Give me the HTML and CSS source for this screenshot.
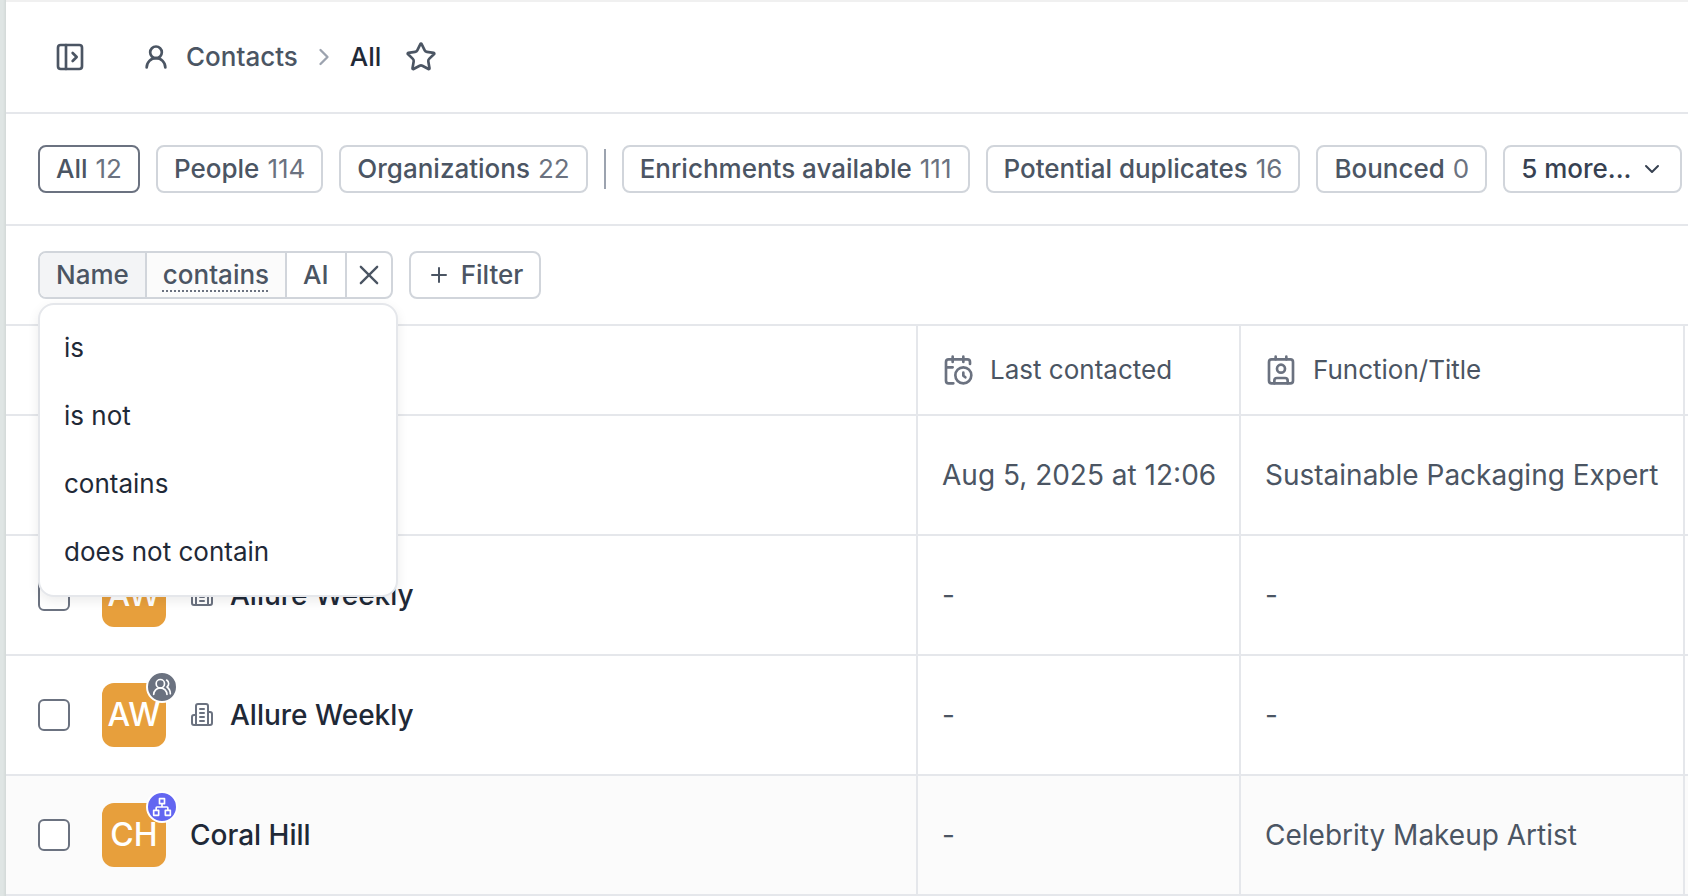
FILE: index.html
```html
<!DOCTYPE html>
<html lang="en">
<head>
    <meta charset="UTF-8">
    <meta name="viewport" content="width=device-width, initial-scale=1.0">
    <title>Contacts</title>
    <link rel="stylesheet" href="styles.css">
</head>
<body>
    <svg class="sprite" aria-hidden="true">
        <symbol id="building" viewBox="0 0 24 24">
            <path d="M6 22V3a2 2 0 0 1 2-2h8a2 2 0 0 1 2 2v19ZM6 12H4a2 2 0 0 0-2 2v6a2 2 0 0 0 2 2h2M18 9h2a2 2 0 0 1 2 2v9a2 2 0 0 1-2 2h-2M10 6h4M10 10h4M10 14h4M10 18h4"/>
        </symbol>
        <symbol id="users" viewBox="0 0 24 24">
            <path d="M18 21a8 8 0 0 0-16 0M22 20c0-3.4-2-6.500-4-8a5 5 0 0 0-.450-8.300"/>
            <circle cx="10" cy="8" r="5"/>
        </symbol>
        <symbol id="network" viewBox="0 0 24 24">
            <path d="M16 16h6v6h-6zM2 16h6v6H2zM9 2h6v6H9zM5 16v-3a1 1 0 0 1 1-1h12a1 1 0 0 1 1 1v3M12 12V8"/>
        </symbol>
    </svg>

    <div class="app">
        <header class="topbar">
            <button class="icon-btn" aria-label="Open sidebar">
                <svg class="icon icon-panel" viewBox="0 0 24 24"><rect x="3" y="3" width="18" height="18" rx="2"/><path d="M9 3v18M14 9l3 3-3 3"/></svg>
            </button>
            <nav class="breadcrumb">
                <a href="#" class="crumb">
                    <svg class="icon icon-user" viewBox="0 0 24 24"><circle cx="12" cy="8" r="5"/><path d="M20 21a8 8 0 0 0-16 0"/></svg>
                    Contacts
                </a>
                <svg class="icon icon-chevron" viewBox="0 0 24 24"><path d="m9 18 6-6-6-6"/></svg>
                <a href="#" class="crumb current">All</a>
            </nav>
            <button class="icon-btn star" aria-label="Add to favorites">
                <svg class="icon icon-star" viewBox="0 0 24 24"><path d="M11.525 2.295a.53.53 0 0 1 .95 0l2.310 4.679a2.123 2.123 0 0 0 1.595 1.160l5.166.756a.53.53 0 0 1 .294.904l-3.736 3.638a2.123 2.123 0 0 0-.611 1.878l.882 5.140a.53.53 0 0 1-.771.560l-4.618-2.428a2.122 2.122 0 0 0-1.973 0L6.396 21.010a.53.53 0 0 1-.770-.560l.881-5.139a2.122 2.122 0 0 0-.611-1.879L2.160 9.795a.53.53 0 0 1 .294-.906l5.165-.755a2.122 2.122 0 0 0 1.597-1.160z"/></svg>
            </button>
        </header>

        <div class="views">
            <button class="pill active">All <span class="count">12</span></button>
            <button class="pill">People <span class="count">114</span></button>
            <button class="pill">Organizations <span class="count">22</span></button>
            <span class="divider"></span>
            <button class="pill">Enrichments available <span class="count">111</span></button>
            <button class="pill">Potential duplicates <span class="count">16</span></button>
            <button class="pill">Bounced <span class="count">0</span></button>
            <button class="pill more">5 more... <svg class="icon icon-down" viewBox="0 0 24 24"><path d="m6 9 6 6 6-6"/></svg></button>
        </div>

        <div class="filters">
            <div class="filter">
                <span class="part field">Name</span>
                <button class="part operator"><span class="dotted">contains</span></button>
                <button class="part">AI</button>
                <button class="part remove" aria-label="Remove filter">
                    <svg class="icon icon-x" viewBox="0 0 24 24"><path d="M19 5 5 19M5 5l14 14"/></svg>
                </button>
                <div class="menu" role="menu">
                    <button class="option" role="menuitem">is</button>
                    <button class="option" role="menuitem">is not</button>
                    <button class="option" role="menuitem">contains</button>
                    <button class="option" role="menuitem">does not contain</button>
                </div>
            </div>
            <button class="pill add"><svg class="icon icon-plus" viewBox="0 0 24 24"><path d="M5 12h14M12 5v14"/></svg> Filter</button>
        </div>

        <table class="contacts">
            <colgroup>
                <col>
                <col class="col-date">
                <col class="col-title">
                <col class="col-rest">
            </colgroup>
            <thead>
                <tr>
                    <th></th>
                    <th>
                        <div class="heading">
                            <svg class="icon icon-head" viewBox="0 0 24 24"><path d="M21 7.500V6a2 2 0 0 0-2-2H5a2 2 0 0 0-2 2v14a2 2 0 0 0 2 2h3.500M16 2v4M8 2v4M3 10h5M17.500 17.500 16 16.300V14"/><circle cx="16" cy="16" r="6"/></svg>
                            Last contacted
                        </div>
                    </th>
                    <th>
                        <div class="heading">
                            <svg class="icon icon-head" viewBox="0 0 24 24"><rect x="3" y="4" width="18" height="18" rx="2"/><circle cx="12" cy="11" r="3"/><path d="M16 2v2M8 2v2M7 22v-2a2 2 0 0 1 2-2h6a2 2 0 0 1 2 2v2"/></svg>
                            Function/Title
                        </div>
                    </th>
                    <th></th>
                </tr>
            </thead>
            <tbody>
                <tr>
                    <td></td>
                    <td>Aug 5, 2025 at 12:06</td>
                    <td>Sustainable Packaging Expert</td>
                    <td></td>
                </tr>
                <tr>
                    <td>
                        <div class="person">
                            <input type="checkbox" aria-label="Select Allure Weekly">
                            <span class="avatar">AW</span>
                            <svg class="icon icon-building"><use href="#building"/></svg>
                            <a href="#" class="name">Allure Weekly</a>
                        </div>
                    </td>
                    <td>-</td>
                    <td>-</td>
                    <td></td>
                </tr>
                <tr>
                    <td>
                        <div class="person">
                            <input type="checkbox" aria-label="Select Allure Weekly">
                            <span class="avatar">AW<span class="badge"><svg class="icon"><use href="#users"/></svg></span></span>
                            <svg class="icon icon-building"><use href="#building"/></svg>
                            <a href="#" class="name">Allure Weekly</a>
                        </div>
                    </td>
                    <td>-</td>
                    <td>-</td>
                    <td></td>
                </tr>
                <tr class="hovered">
                    <td>
                        <div class="person">
                            <input type="checkbox" aria-label="Select Coral Hill">
                            <span class="avatar">CH<span class="badge org"><svg class="icon"><use href="#network"/></svg></span></span>
                            <a href="#" class="name">Coral Hill</a>
                        </div>
                    </td>
                    <td>-</td>
                    <td>Celebrity Makeup Artist</td>
                    <td></td>
                </tr>
            </tbody>
        </table>
    </div>
</body>
</html>
```
FILE: styles.css
```css
* {
    box-sizing: border-box;
}
body {
    margin: 0;
    padding-left: 6px;
    background: linear-gradient(to right, #dfe5e4 3px, #d3d9d8 6px);
    font-family: Inter, sans-serif;
    font-size: 26px;
    line-height: 36px;
    color: #4b5563;
}
button {
    font: inherit;
    color: inherit;
    background: none;
    border: none;
    padding: 0;
    cursor: pointer;
}
a {
    color: inherit;
    text-decoration: none;
}
.sprite {
    display: none;
}
.icon {
    display: block;
    flex: none;
    fill: none;
    stroke: currentColor;
    stroke-width: 2;
    stroke-linecap: round;
    stroke-linejoin: round;
}
.app {
    min-height: 100vh;
    background: #fff;
    border-top: 2px solid #f0f0f0;
}

/* top bar */
.topbar {
    display: flex;
    align-items: center;
    height: 112px;
    padding: 0 48px;
    border-bottom: 2px solid #e5e7eb;
    font-weight: 500;
}
.icon-panel {
    width: 32px;
    height: 32px;
}
.breadcrumb {
    display: flex;
    align-items: center;
    gap: 12px;
    margin-left: 56px;
}
.crumb {
    display: flex;
    align-items: center;
    gap: 16px;
}
.crumb.current {
    color: #1f2937;
}
.icon-user {
    width: 28px;
    height: 28px;
    stroke-width: 2.3;
}
.icon-chevron {
    width: 28px;
    height: 28px;
    color: #9ca3af;
}
.star {
    margin-left: 24px;
}
.icon-star {
    width: 32px;
    height: 32px;
}

/* saved views */
.views {
    display: flex;
    align-items: center;
    gap: 16px;
    height: 112px;
    padding: 0 32px;
    border-bottom: 2px solid #e5e7eb;
}
.pill {
    display: flex;
    flex: none;
    align-items: center;
    gap: 8px;
    height: 48px;
    padding: 0 16px;
    border: 2px solid #d1d5db;
    border-radius: 8px;
    font-weight: 500;
    white-space: nowrap;
}
.pill.active {
    border-color: #6b7280;
}
.count {
    font-weight: 400;
    color: #6b7280;
}
.divider {
    flex: none;
    width: 2px;
    height: 40px;
    background: #9ca3af;
}
.pill.more {
    color: #374151;
}
.icon-down {
    width: 24px;
    height: 24px;
}

/* filters */
.filters {
    display: flex;
    align-items: center;
    gap: 16px;
    height: 100px;
    padding: 0 32px;
    border-bottom: 2px solid #e5e7eb;
}
.filter {
    position: relative;
    display: flex;
    height: 48px;
    border: 2px solid #d1d5db;
    border-radius: 8px;
    font-weight: 500;
}
.part {
    display: flex;
    align-items: center;
    padding: 0 16px;
}
.part + .part {
    border-left: 2px solid #d1d5db;
}
.field {
    background: #f3f4f6;
    border-radius: 6px 0 0 6px;
}
.operator {
    background: #fbfbfb;
}
.dotted {
    text-decoration: underline dotted 2px #6b7280;
    text-underline-offset: 6px;
}
.remove {
    padding: 0 8px;
}
.icon-x {
    width: 28px;
    height: 28px;
}
.pill.add {
    gap: 10px;
}
.icon-plus {
    width: 24px;
    height: 24px;
}
.menu {
    position: absolute;
    z-index: 1;
    top: 50px;
    left: -2px;
    width: 360px;
    padding: 9px 0;
    background: #fff;
    border: 2px solid #e5e7eb;
    border-radius: 16px;
    box-shadow: 0 4px 12px rgba(0, 0, 0, 0.08);
    font-weight: 400;
    color: #1f2937;
}
.option {
    display: block;
    width: 100%;
    padding: 16px 24px;
    text-align: left;
}

/* table */
.contacts {
    width: 100%;
    border-collapse: separate;
    border-spacing: 0;
    table-layout: fixed;
}
.col-date {
    width: 323px;
}
.col-title {
    width: 444px;
}
.col-rest {
    width: 3px;
}
.contacts th,
.contacts td {
    padding: 0 24px;
    border-bottom: 2px solid #e5e7eb;
    border-right: 2px solid #e5e7eb;
    text-align: left;
    font-weight: 400;
    white-space: nowrap;
}
.contacts th:first-child,
.contacts td:first-child {
    padding: 0 32px;
}
.contacts th:last-child,
.contacts td:last-child {
    padding: 0;
    border-right: none;
}
.contacts th {
    height: 90px;
}
.contacts td {
    height: 120px;
    font-size: 28px;
}
.heading {
    display: flex;
    align-items: center;
    gap: 16px;
}
.icon-head {
    width: 32px;
    height: 32px;
    color: #6b7280;
}
.hovered {
    background: #fbfbfb;
}
.person {
    display: flex;
    align-items: center;
}
.person input {
    appearance: none;
    width: 32px;
    height: 32px;
    margin: 0 32px 0 0;
    border: 2px solid #6b7280;
    border-radius: 6px;
    background: #fff;
}
.avatar {
    position: relative;
    width: 64px;
    height: 64px;
    margin-right: 24px;
    border-radius: 12px;
    background: #e79f3c;
    color: #fff;
    font-size: 32px;
    font-weight: 500;
    line-height: 64px;
    text-align: center;
}
.badge {
    position: absolute;
    top: -12px;
    right: -12px;
    display: flex;
    align-items: center;
    justify-content: center;
    width: 32px;
    height: 32px;
    border: 2px solid #fff;
    border-radius: 50%;
    background: #6b7280;
}
.badge.org {
    background: #6366f1;
}
.badge .icon {
    width: 20px;
    height: 20px;
}
.icon-building {
    width: 24px;
    height: 24px;
    margin-right: 16px;
    color: #6b7280;
}
.name {
    font-weight: 500;
    color: #1f2937;
}
```
